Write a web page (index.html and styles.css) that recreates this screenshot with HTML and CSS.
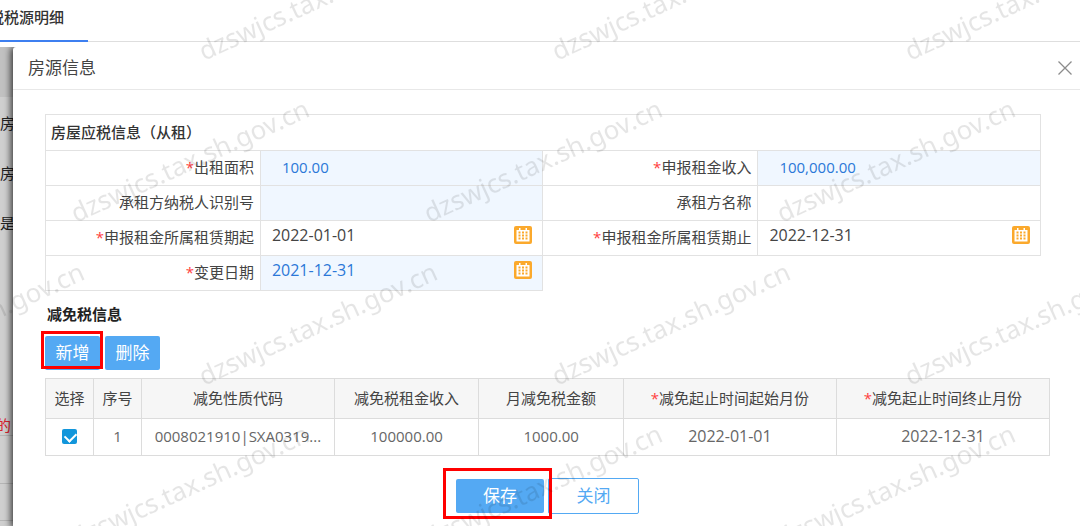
FILE: index.html
```html
<!DOCTYPE html>
<html lang="zh-CN">
<head>
<meta charset="utf-8">
<meta name="viewport" content="width=device-width, initial-scale=1">
<title>房源信息</title>
<link rel="stylesheet" href="styles.css">
</head>
<body>
<svg class="sprite" aria-hidden="true">
  <symbol id="calendar" viewBox="0 0 18 18">
    <rect width="18" height="18" rx="2" fill="#fba92c"/>
    <path fill="#fff" d="M2.5 4h13v11.500h-13z"/>
    <path fill="#fff" d="M5 2h1.500v2H5zM11.500 2H13v2h-1.500z"/>
    <path fill="#fba92c" d="M4.500 5.500h2v2h-2zM8 5.500h2v2H8zM11.500 5.500h2v2h-2zM4.500 8.500h2v2h-2zM8 8.500h2v2H8zM11.500 8.500h2v2h-2zM4.500 11.500h2v2h-2zM8 11.500h2v2H8zM11.500 11.500h2v2h-2z"/>
  </symbol>
</svg>

<nav class="tabs"><a class="tab" href="#source">税税源明细</a></nav>

<div class="stage">
  <div class="backdrop" id="source">
    <div class="backdrop-head"></div>
    <div class="backdrop-row">房</div>
    <div class="backdrop-row">房</div>
    <div class="backdrop-row backdrop-last">是</div>
    <div class="backdrop-note">的</div>
    <div class="backdrop-line"></div>
    <div class="backdrop-line backdrop-short"></div>
  </div>

  <section class="dialog" role="dialog" aria-labelledby="dialog-title">
    <header class="dialog-head">
      <h1 class="dialog-title" id="dialog-title">房源信息</h1>
      <button class="close" type="button" aria-label="关闭窗口">
        <svg width="14" height="14" viewBox="0 0 14 14"><path d="M.5.5l13 13M13.500.5l-13 13" fill="none" stroke="#8c8c8c" stroke-width="1.300"/></svg>
      </button>
    </header>

    <form class="dialog-body">
      <table class="form-table">
        <colgroup><col class="c-label"><col class="c-field"><col class="c-label"><col class="c-field"></colgroup>
        <tbody>
          <tr class="form-heading"><th colspan="4">房屋应税信息（从租）</th></tr>
          <tr>
            <td class="label"><label for="area"><span class="req">*</span>出租面积</label></td>
            <td class="tint"><input class="field number" id="area" value="100.00"></td>
            <td class="label"><label for="income"><span class="req">*</span>申报租金收入</label></td>
            <td class="tint"><input class="field number" id="income" value="100,000.00"></td>
          </tr>
          <tr>
            <td class="label"><label for="taxid">承租方纳税人识别号</label></td>
            <td class="tint"><input class="field number" id="taxid"></td>
            <td class="label"><label for="tenant">承租方名称</label></td>
            <td><input class="field number" id="tenant"></td>
          </tr>
          <tr>
            <td class="label"><label for="start"><span class="req">*</span>申报租金所属租赁期起</label></td>
            <td><div class="date"><input class="field" id="start" value="2022-01-01"><button class="pick" type="button" aria-label="选择日期"><svg width="18" height="18"><use href="#calendar"/></svg></button></div></td>
            <td class="label"><label for="end"><span class="req">*</span>申报租金所属租赁期止</label></td>
            <td><div class="date"><input class="field" id="end" value="2022-12-31"><button class="pick" type="button" aria-label="选择日期"><svg width="18" height="18"><use href="#calendar"/></svg></button></div></td>
          </tr>
          <tr>
            <td class="label"><label for="change"><span class="req">*</span>变更日期</label></td>
            <td class="tint"><div class="date"><input class="field" id="change" value="2021-12-31"><button class="pick" type="button" aria-label="选择日期"><svg width="18" height="18"><use href="#calendar"/></svg></button></div></td>
          </tr>
        </tbody>
      </table>

      <h2 class="subtitle">减免税信息</h2>
      <div class="toolbar">
        <span class="marked"><button class="btn" type="button">新增</button></span>
        <button class="btn" type="button">删除</button>
      </div>

      <table class="grid">
        <colgroup><col class="g-small"><col class="g-small"><col class="g-code"><col class="g-money"><col class="g-money"><col class="g-date"><col class="g-date"></colgroup>
        <thead>
          <tr><th>选择</th><th>序号</th><th>减免性质代码</th><th>减免税租金收入</th><th>月减免税金额</th><th><span class="req">*</span>减免起止时间起始月份</th><th><span class="req">*</span>减免起止时间终止月份</th></tr>
        </thead>
        <tbody>
          <tr><td><input class="check" type="checkbox" aria-label="选择第1行" checked></td><td>1</td><td>0008021910|SXA0319...</td><td>100000.00</td><td>1000.00</td><td class="day">2022-01-01</td><td class="day">2022-12-31</td></tr>
        </tbody>
      </table>

      <footer class="actions">
        <span class="marked marked-wide"><button class="btn btn-wide" type="button">保存</button></span>
        <button class="btn btn-plain" type="button">关闭</button>
      </footer>
    </form>
  </section>
</div>

<svg class="watermark" aria-hidden="true">
  <defs>
    <pattern id="marks" width="353" height="325" patternUnits="userSpaceOnUse">
      <text id="mark" class="mark" transform="translate(204 61) rotate(-24.500)">dzswjcs.tax.sh.gov.cn</text>
      <use href="#mark" x="-353"/>
      <use href="#mark" y="325"/>
      <use href="#mark" x="-353" y="325"/>
      <use href="#mark" x="-128" y="162"/>
      <use href="#mark" x="-481" y="162"/>
      <use href="#mark" x="225" y="162"/>
    </pattern>
  </defs>
  <rect width="100%" height="100%" fill="url(#marks)"/>
</svg>
</body>
</html>
```
FILE: styles.css
```css
* { box-sizing: border-box; }

body {
  display: flex;
  flex-direction: column;
  min-height: 100vh;
  margin: 0;
  position: relative;
  overflow: hidden;
  background: #fff;
  color: #444;
  font: 15px/20px "Open Sans", "Noto Sans CJK SC", sans-serif;
}

button, input { font: inherit; margin: 0; }

.sprite { position: absolute; width: 0; height: 0; }

.tabs {
  display: flex;
  height: 42px;
  border-bottom: 1px solid #dedede;
}

.tab {
  height: 42px;
  margin-left: -11px;
  padding: 7px 24px 0 0;
  border-bottom: 2px solid #3d7ff0;
  color: #333;
  font-weight: 500;
  text-decoration: none;
}

.stage {
  display: grid;
  flex: 1;
  margin-top: 5px;
}

.backdrop, .dialog { grid-area: 1 / 1; }

.backdrop {
  background: #cfcfcf;
  color: #222;
}

.backdrop-head { height: 50px; background: #c1c1c1; }
.backdrop-row { height: 50px; padding-top: 16px; }
.backdrop-last { height: 270px; }
.backdrop-note {
  height: 20px;
  margin-left: -4px;
  margin-top: -52px;
  color: #d9232e;
}
.backdrop-line { height: 49px; border: solid #b5b5b5; border-width: 1px 0; }
.backdrop-short { height: 37px; border-top: 0; }

.dialog {
  margin-left: 13px;
  border-radius: 3px 0 0 0;
  background: #fff;
  box-shadow: -1px 1px 7px 1px rgba(0, 0, 0, .75);
  clip-path: inset(0 0 0 -13px);
}

.dialog-head {
  display: flex;
  align-items: center;
  justify-content: space-between;
  height: 43px;
  padding: 0 8px 0 15px;
  border-bottom: 1px solid #e8e8e8;
}

.dialog-title {
  margin: 0;
  font-size: 17px;
  font-weight: 400;
}

.close, .pick {
  display: flex;
  padding: 0;
  border: 0;
  background: none;
}

.dialog-body { padding: 24px 30px 12px 32px; }

.form-table, .grid {
  border-collapse: collapse;
  table-layout: fixed;
}

.form-table { width: calc(100% - 9px); }
.c-label { width: 21.6%; }
.c-field { width: 28.4%; }

.form-table tr { height: 35px; }
.form-table .form-heading { height: 36px; }
.form-table td, .form-table th {
  padding: 0 0 2px;
  border: 1px solid #e2e2e2;
}
.form-table th {
  padding-left: 5px;
  color: #333;
  font-weight: 500;
  text-align: left;
}
.form-table .label { padding-right: 6px; text-align: right; }
.form-table .tint { background: #f0f7ff; }
.tint .field { color: #2b78d8; }
.req { color: #ff4040; }

.field {
  display: block;
  flex: 1;
  width: 100%;
  min-width: 0;
  height: 24px;
  padding: 0 0 0 11px;
  border: 0;
  outline: 0;
  background: none;
  color: #444;
  font-size: 16px;
}
.number { padding-left: 21px; font-size: 15px; }

.date {
  display: flex;
  align-items: center;
  padding: 0 10px 4px 0;
}

.subtitle {
  margin: 13px 0 12px 2px;
  color: #222;
  font-size: 15px;
  font-weight: 700;
}

.toolbar { display: flex; gap: 5px; margin-bottom: 8px; }

.btn {
  display: block;
  width: 55px;
  height: 34px;
  padding: 0;
  border: 0;
  border-radius: 2px;
  background: #54a9f3;
  color: #fff;
  font-size: 17px;
}
.btn-wide { width: 88px; }
.btn-plain {
  width: 91px;
  height: 36px;
  border: 1px solid #54a9f3;
  background: #fff;
  color: #54a9f3;
}

/* Red frame drawn over the highlighted buttons */
.marked { position: relative; }
.marked::after {
  content: "";
  position: absolute;
  z-index: 1;
  inset: -5px -3px 1px -4px;
  border: 3px solid #f00;
  pointer-events: none;
}
.marked-wide::after { inset: -11px -8px -6px -13px; }

.grid { width: 100%; text-align: center; }
.g-small { width: 48px; }
.g-code { width: 19.2%; }
.g-money { width: 14.4%; }
.grid th, .grid td {
  padding: 0 0 2px;
  border: 1px solid #dcdcdc;
}
.grid th {
  height: 40px;
  background: #f6f6f6;
  font-weight: 400;
}
.grid td { height: 37px; color: #666; }
.grid .day { font-size: 16px; }

.check {
  display: block;
  appearance: none;
  width: 15px;
  height: 15px;
  margin: 0 auto;
  border-radius: 2px;
  background: #1296db;
}
.check:checked::after {
  content: "";
  display: block;
  width: 9px;
  height: 6px;
  margin: 3px;
  border: solid #fff;
  border-width: 0 0 2px 2px;
  transform: rotate(-45deg);
}

.actions {
  display: flex;
  align-items: center;
  justify-content: center;
  gap: 4px;
  padding-top: 22px;
}

.watermark {
  position: absolute;
  inset: 0;
  width: 100%;
  height: 100%;
  z-index: 2;
  pointer-events: none;
}
.mark {
  fill: rgba(0, 0, 0, .1);
  font-family: "Noto Sans", sans-serif;
  font-size: 26px;
}
```
